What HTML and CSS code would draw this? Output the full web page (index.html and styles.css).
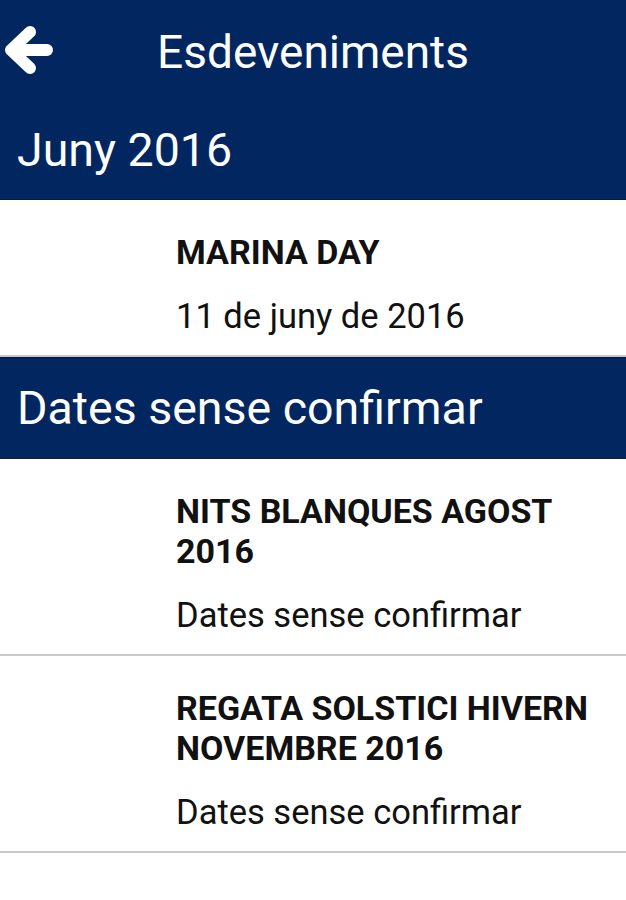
FILE: index.html
```html
<!DOCTYPE html>
<html lang="ca">
<head>
<meta charset="utf-8">
<title>Esdeveniments</title>
<link rel="stylesheet" href="styles.css">
</head>
<body>
<header class="appbar">
  <svg class="back" width="60" height="100" viewBox="0 0 60 100" aria-label="Enrere">
    <path d="M30 31 L11 49 L30 67 M11 49 H47" fill="none" stroke="#ffffff" stroke-width="12" stroke-linecap="round" stroke-linejoin="round"/>
  </svg>
  <h1 class="title">Esdeveniments</h1>
  <span></span>
</header>
<main class="list">
  <h2 class="section">Juny 2016</h2>
  <div class="item">
    <div class="item-title">MARINA DAY</div>
    <div class="item-date">11 de juny de 2016</div>
  </div>
  <h2 class="section section-next">Dates sense confirmar</h2>
  <div class="item">
    <div class="item-title">NITS BLANQUES AGOST 2016</div>
    <div class="item-date">Dates sense confirmar</div>
  </div>
  <div class="item">
    <div class="item-title">REGATA SOLSTICI HIVERN NOVEMBRE 2016</div>
    <div class="item-date">Dates sense confirmar</div>
  </div>
</main>
</body>
</html>
```
FILE: styles.css
```css
* { box-sizing: border-box; }
html, body { margin: 0; padding: 0; background: #ffffff; }
body { font-family: Roboto, "Noto Sans", "Liberation Sans", sans-serif; width: 626px; }

.appbar {
  display: grid;
  grid-template-columns: 1fr auto 1fr;
  align-items: center;
  height: 100px;
  background: #022660;
}
.back { display: block; }
.title {
  margin: 0;
  font-weight: 400;
  font-size: 46px;
  color: #ffffff;
  line-height: 100px;
  padding-top: 2px;
}

.list { display: flex; flex-direction: column; }

.section {
  margin: 0;
  display: flex;
  align-items: center;
  height: 100px;
  padding-left: 17px;
  background: #022660;
  color: #ffffff;
  font-weight: 400;
  font-size: 46.5px;
  border-bottom: 1px solid #141c2e;
}
.section-next {
  height: 102px;
  border-top: 1px solid #0c1734;
}

.item {
  display: flex;
  flex-direction: column;
  gap: 24px;
  padding: 32px 4px 19px 176px;
  border-bottom: 2px solid #c9c9c9;
  color: #111111;
}
.item-title {
  font-weight: 700;
  font-size: 34px;
  line-height: 40px;
}
.item-date {
  font-weight: 400;
  font-size: 34.5px;
  line-height: 40px;
}
```
